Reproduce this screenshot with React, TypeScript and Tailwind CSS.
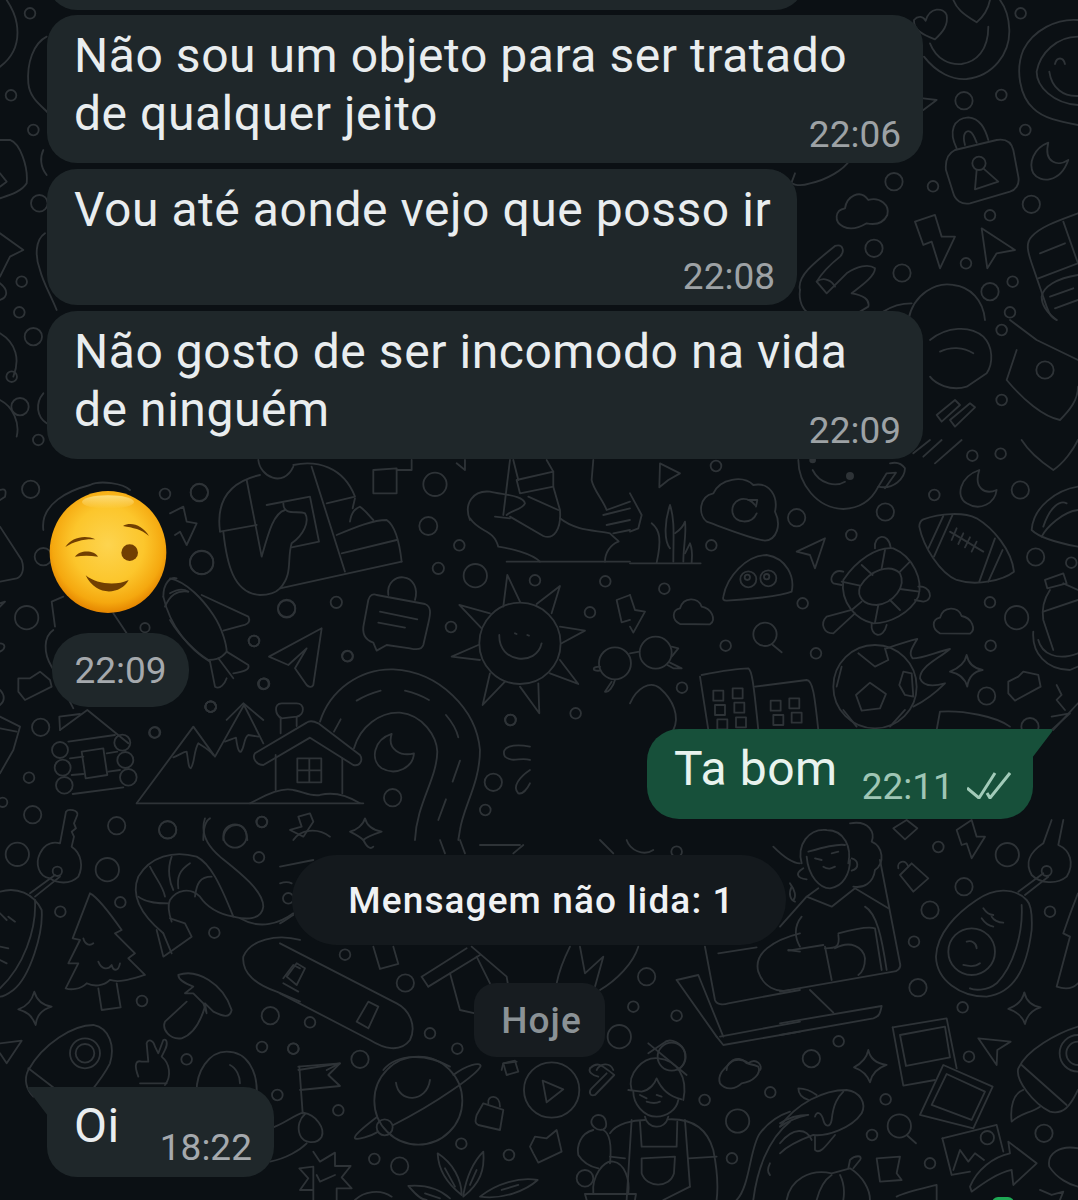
import React from 'react';

type Group = { x: number; y: number; circles?: number[][]; paths: string[] };

// Wallpaper doodles. Each group is written in 3x coordinates from its own origin
const groups: Group[] = [
  {
    x: 780,
    y: 0,
    paths: [
      'M 432 170 C 470 220 520 240 560 237 C 640 228 690 160 688 90 C 687 50 675 20 660 0',
      'M 450 130 C 470 180 510 195 545 192 C 590 185 625 150 625 80',
      'M 402 60 C 415 45 430 50 437 62 C 450 20 490 22 500 45 C 505 75 490 95 465 118 C 430 105 400 90 402 60 Z',
      'M 520 0 C 530 25 545 40 590 67 C 610 50 625 25 630 0',
      'M 894 60 C 830 55 760 90 730 150 C 705 210 720 290 760 325 C 790 355 840 365 894 375',
      'M 894 110 C 830 110 780 160 770 215 C 770 260 820 310 894 315',
      'M 808 215 C 815 265 850 290 894 288',
      'M 825 192 C 830 170 850 170 855 192',
      'M 530 445 C 505 395 520 355 565 352 C 600 355 615 385 625 420',
      'M 555 435 C 545 400 560 390 570 395 C 580 400 585 415 590 428',
      'M 525 450 L 650 420 C 680 415 695 430 700 450 L 715 530 C 720 555 705 570 690 575 L 570 610 C 545 615 525 600 520 580 L 498 510 C 495 480 505 460 525 450 Z',
      'M 590 510 L 585 568 L 655 545 L 610 505',
      'M 805 428 C 760 445 745 490 760 520 C 780 550 840 550 865 480 C 835 500 790 490 805 428 Z',
      'M 190 680 C 160 665 165 630 195 625 C 200 590 240 565 265 600 C 300 590 330 615 322 645 C 310 670 285 675 260 670 C 235 685 210 690 190 680 Z',
      'M 405 665 L 465 645 L 485 710 L 525 710 L 480 805 L 455 725 L 430 735 Z',
      'M 605 685 L 705 750 L 650 760 L 622 805 Z',
      'M 60 870 C 50 830 100 790 165 738 C 190 730 195 755 180 770 C 155 790 125 820 110 845 L 140 880 L 200 820 C 230 800 265 790 285 805 C 285 830 240 860 215 880 C 250 885 270 900 265 920 L 240 935',
      'M 60 870 C 55 905 70 930 85 940',
      'M 110 845 C 130 830 155 840 165 860',
      'M 894 640 C 840 660 780 680 755 710 C 735 730 745 760 755 790 L 800 920 C 810 950 820 955 830 960',
      'M 780 760 L 855 730',
      'M 850 665 L 894 790',
      'M 775 835 L 894 790',
      'M 894 825 C 830 835 790 860 785 890 C 785 920 810 945 830 960',
      'M 810 890 L 880 865',
      'M 825 925 L 894 900',
      'M 385 960 C 400 880 470 845 520 855 C 570 860 610 900 615 960',
      'M 310 935 C 340 915 370 910 395 910',
      'M 430 295 L 470 300 L 430 330',
      'M 0 520 C 30 560 60 560 90 550 C 140 540 190 510 210 480',
      'M 45 520 L 30 560',
    ],
    circles: [
      [722, 40, 16], [552, 302, 26], [664, 285, 16], [736, 390, 16], [342, 545, 26], [459, 559, 16], [754, 613, 26],
      [630, 646, 16], [282, 745, 26], [366, 819, 26], [558, 790, 16], [698, 845, 16], [630, 875, 26], [690, 937, 16],
      [597, 490, 20],
    ],
  },
  {
    x: 930,
    y: 320,
    paths: [
      'M 0 60 C 50 20 120 15 160 50 C 190 80 190 130 170 160 L 110 200 C 60 215 15 190 0 170',
      'M 30 95 C 60 80 100 80 130 100',
      'M 240 0 L 320 60 L 444 120',
      'M 260 90 L 230 180 C 280 240 340 290 390 300 C 420 270 444 240 444 200',
      'M 20 285 L 75 240 L 90 255 L 35 305 Z',
      'M 60 300 L 120 250 L 135 262 L 75 320 Z',
    ],
    circles: [[215, 30, 16], [345, 150, 26], [215, 240, 16]],
  },
  {
    x: 630,
    y: 440,
    paths: [
      'M 90 70 L 150 100 L 115 120 L 88 142 Z',
      'M 0 370 L 212 370',
      'M 65 250 C 90 270 95 300 80 368',
      'M 120 325 C 100 300 105 240 120 195 C 135 240 130 290 130 365',
      'M 135 280 C 150 270 160 260 165 245 C 170 280 160 320 160 365',
      'M 165 340 L 180 310 C 190 335 185 355 185 368',
      'M 0 160 L 35 225 L 25 265 L 0 275',
      'M 230 245 C 205 225 205 170 250 160 C 270 115 340 105 370 135 C 420 125 445 170 435 215 C 455 255 440 300 405 302 C 360 295 300 270 230 245 Z',
      'M 375 195 C 345 160 300 180 308 220 C 315 250 365 255 380 220',
      'M 355 180 L 382 180 L 378 200',
      'M 505 60 C 505 130 560 205 640 207 C 700 205 730 170 745 140 C 790 150 825 115 825 85 C 815 70 800 65 780 70',
      'M 548 90 C 570 135 620 140 645 125',
      'M 745 140 L 770 100 L 798 98 L 765 145',
      'M 850 40 L 900 0',
      'M 915 70 L 995 0',
      'M 880 50 L 935 0',
      'M 1048 90 C 990 110 975 170 1010 190 C 1050 215 1095 190 1100 150 C 1065 165 1030 145 1048 90 Z',
      'M 880 238 C 930 220 1000 215 1040 235 C 1090 265 1145 330 1152 395 C 1120 420 1040 440 980 420 C 930 400 880 320 868 260 C 868 250 872 242 880 238 Z',
      'M 940 228 L 895 325',
      'M 968 224 L 912 350',
      'M 1095 295 L 1048 425',
      'M 1118 330 L 1075 425',
      'M 960 275 L 1060 335',
      'M 980 265 L 965 300 M 1000 280 L 985 312 M 1020 292 L 1005 322 M 1040 305 L 1025 335',
      'M 1344 140 C 1280 150 1210 200 1205 270 C 1230 295 1290 310 1344 320',
      'M 1344 210 C 1300 215 1250 260 1235 290',
      'M 1240 260 C 1260 200 1290 180 1310 190',
      'M 1175 0 C 1200 40 1240 70 1270 90 C 1300 70 1330 30 1344 0',
      'M 500 335 L 585 295 L 555 385 L 540 345 Z',
      'M 280 470 C 290 410 350 345 410 345 C 470 355 495 410 485 455 C 450 470 330 480 290 482 C 280 482 278 478 280 470 Z',
      'M 640 420 C 680 360 740 320 790 325 C 850 350 880 420 865 470 C 840 520 780 550 730 550 C 680 540 630 490 640 420 Z',
      'M 690 440 C 720 390 780 370 810 400 C 830 440 790 490 740 495 C 700 495 680 470 690 440 Z',
      'M 765 330 L 755 385',
      'M 695 375 L 728 405',
      'M 810 395 L 840 365',
      'M 635 425 L 690 437',
      'M 810 447 L 868 455',
      'M 780 480 L 810 510',
      'M 745 495 L 735 548',
      'M 695 485 L 665 510',
      'M 735 325 C 730 285 775 275 782 322',
      'M 640 395 C 610 385 595 420 610 430 L 635 435',
      'M 865 440 C 900 435 915 480 880 485 L 855 480',
      'M 665 510 L 590 530 C 570 550 580 580 610 580 L 675 520',
      'M 725 550 C 720 590 760 600 770 555',
      'M 1245 420 L 1300 400 L 1310 430 L 1252 445 Z',
      'M 1260 450 C 1240 480 1235 510 1240 540 L 1270 630',
      'M 1300 430 L 1344 450',
      'M 1240 515 L 1344 480',
      'M 1210 575 C 1205 640 1250 690 1320 690 L 1344 680',
      'M 1225 600 C 1235 640 1280 665 1344 640',
      'M 150 552 C 125 540 125 510 150 505 C 160 470 205 470 215 500 C 245 505 260 540 240 553 Z',
      'M 930 580 C 905 568 905 538 930 533 C 940 498 985 498 995 528 C 1025 533 1040 568 1020 581 Z',
      'M 425 612 L 455 637',
      'M 0 640 L 28 635',
      'M 125 620 L 145 625 L 125 650',
      'M 120 668 L 155 685 L 130 685 L 112 675',
      'M 0 465 L 15 510 L 45 515 L 10 578 L 0 560',
      'M 215 705 C 290 690 340 685 355 685 C 365 690 370 720 385 870',
      'M 210 710 L 235 870',
      'M 375 740 L 530 720 C 550 720 555 780 565 870',
      'M 720 728 L 768 762 L 750 805 L 695 812 L 678 765 Z',
      'M 685 640 L 735 680 L 775 660 L 765 625',
      'M 820 695 L 845 700 L 850 770 L 825 765 L 808 735 Z',
      'M 635 680 L 620 740 M 640 810 L 680 860 M 825 810 L 780 860',
      'M 770 625 C 800 615 830 605 862 597 C 845 625 835 640 848 655 C 880 655 920 635 960 627 C 920 660 870 680 870 715 C 880 740 910 740 945 730 C 915 760 880 785 850 800',
      'M 1010 645 C 1015 670 1030 685 1058 690 C 1030 695 1015 715 1012 740 C 1005 715 985 700 960 695 C 985 685 1005 670 1010 645 Z',
      'M 1135 725 L 1165 710 L 1180 695 L 1225 705 L 1232 740 L 1155 782 L 1135 760 Z',
      'M 1280 735 L 1295 765 L 1280 780 L 1305 810',
      'M 920 870 L 930 815 C 1000 810 1100 830 1140 860',
      'M 0 790 C 20 745 60 720 90 745 C 130 780 150 830 130 870',
      'M 1265 830 L 1320 820 L 1265 870',
      'M 1344 790 L 1270 870',
      'M 250 752 h 30 v 30 h -30 Z M 308 745 h 30 v 30 h -30 Z M 255 795 h 30 v 30 h -30 Z M 313 788 h 30 v 30 h -30 Z M 262 838 h 30 v 30 h -30 Z M 318 832 h 30 v 30 h -30 Z',
      'M 422 782 h 30 v 30 h -30 Z M 478 775 h 30 v 30 h -30 Z M 430 825 h 30 v 30 h -30 Z M 485 818 h 30 v 30 h -30 Z',
    ],
    circles: [
      [258, 78, 16], [500, 233, 26], [766, 216, 26], [664, 285, 16], [244, 316, 16], [103, 446, 16], [518, 490, 16],
      [287, 617, 16], [558, 640, 16], [156, 743, 16], [913, 165, 16], [1171, 150, 26], [1027, 47, 16], [1112, 41, 16],
      [1217, 351, 26], [1324, 368, 16], [1080, 487, 16], [1160, 533, 35], [1082, 617, 16], [1070, 768, 26],
      [1200, 860, 26], [355, 418, 24], [415, 415, 24], [352, 412, 8], [410, 410, 8], [405, 583, 35], [77, 638, 48],
      [735, 740, 125],
    ],
  },
  {
    x: 170,
    y: 460,
    paths: [
      'M 150 215 C 140 140 160 70 270 45',
      'M 150 215 L 260 195',
      'M 160 215 C 170 310 190 400 270 405 C 300 405 320 395 330 385 L 695 305',
      'M 230 60 L 275 290 C 295 220 310 160 345 150',
      'M 265 0 C 270 50 340 85 370 20',
      'M 290 135 L 420 110 L 447 245 L 365 262',
      'M 340 130 C 340 170 385 150 405 160 C 420 185 400 225 365 250 C 350 300 370 340 330 385',
      'M 425 20 L 525 335',
      'M 370 15 C 440 0 520 20 555 110 L 470 130',
      'M 555 115 L 548 145',
      'M 500 225 C 560 200 610 180 650 180 C 680 200 690 260 695 305',
      'M 515 280 L 680 240',
      'M 540 185 C 545 150 560 145 570 140 C 590 155 600 170 610 180',
      'M 610 30 L 680 25 L 680 100 L 610 100 Z',
      'M 680 30 L 725 30 L 725 0',
      'M 1000 165 L 1020 0',
      'M 975 170 L 1020 175',
      'M 900 180 C 880 130 910 90 960 95 C 1000 105 1060 105 1065 130 C 1055 150 1025 150 1010 165',
      'M 900 175 C 930 220 970 205 985 260 C 1020 265 1085 280 1110 305',
      'M 1010 305 L 1380 305',
      'M 1040 60 L 1150 35 L 1150 80 L 1050 100 Z',
      'M 1030 0 L 1045 60',
      'M 1130 0 L 1150 35',
      'M 1150 80 L 1170 150 C 1175 210 1150 240 1120 228 L 1020 170',
      'M 1075 110 L 1165 150',
      'M 1170 175 C 1220 215 1280 210 1320 220 C 1340 240 1350 245 1345 245 C 1320 255 1305 280 1305 305',
      'M 1270 0 L 1265 60 C 1270 90 1300 120 1310 150 L 1380 125',
      'M 1300 165 L 1380 145 M 1310 195 L 1380 180 M 1330 220 L 1380 210',
      'M 885 0 L 885 30 L 860 10',
      'M 620 405 L 765 432 C 785 440 782 460 775 490 L 760 555 C 755 570 740 570 720 565 L 650 555 L 620 572 L 610 548 C 585 540 575 520 582 490 L 595 420 C 598 405 610 400 620 405 Z',
      'M 655 405 C 650 365 680 350 700 352 C 730 355 745 385 735 420',
      'M 630 455 L 742 478',
      'M 625 488 L 705 503',
      'M 1000 440 L 1012 345 L 1050 425',
      'M 1100 432 L 1170 378 L 1145 460',
      'M 1170 500 L 1245 512 L 1175 550',
      'M 1170 600 L 1225 672 L 1140 640',
      'M 1105 670 L 1108 760 L 1050 680',
      'M 1005 665 L 938 735 L 960 640',
      'M 930 600 L 845 590 L 925 555',
      'M 935 505 L 868 435 L 960 460',
      'M 988 525 C 985 610 1100 620 1115 550',
      'M 297 590 L 455 505 L 430 675 C 425 685 415 680 410 675 L 375 625 L 410 565 L 355 615 Z',
      'M 0 355 C 50 365 100 420 130 465 C 160 510 170 560 170 575 C 150 600 130 600 115 600 C 80 580 30 530 0 480',
      'M 95 405 L 235 470 C 245 490 225 495 215 497 L 160 512',
      'M 0 400 C 25 385 40 385 55 395',
      'M 120 605 L 135 680 C 150 690 165 670 170 655',
      'M 145 595 L 190 655',
      'M 170 575 L 235 615 C 240 630 220 635 190 640',
      'M 1290 620 C 1265 620 1265 635 1290 632',
      'M 1325 665 L 1305 695 C 1315 700 1330 680 1335 660',
      'M 1380 405 L 1340 420 L 1355 487 L 1380 480',
      'M 0 160 L 40 140 L 50 185 L 80 190 L 50 255 L 30 215 L 15 225',
      'M 1035 520 L 1040 522 M 1072 525 L 1077 527',
    ],
    circles: [
      [88, 97, 26], [95, 308, 35], [795, 73, 35], [775, 198, 27], [868, 256, 16], [805, 325, 17], [916, 347, 35],
      [1095, 361, 16], [1306, 364, 16], [1260, 457, 16], [350, 445, 26], [499, 427, 17], [252, 543, 16], [533, 589, 16],
      [843, 501, 16], [282, 671, 16], [122, 740, 16], [1021, 780, 16], [1217, 760, 16], [1050, 550, 122], [1335, 610, 48],
    ],
  },
  {
    x: 130,
    y: 640,
    paths: [
      'M 20 490 L 190 260 L 255 350 L 342 195 L 400 310',
      'M 20 490 L 700 490',
      'M 130 352 C 150 345 160 335 170 335 C 175 360 175 385 182 385 C 195 370 190 335 205 310 C 220 320 240 330 250 345',
      'M 285 305 C 300 300 310 295 318 293 C 320 310 325 340 333 335 C 345 320 340 295 355 285 L 385 290',
      'M 455 235 C 435 225 430 190 455 190 L 500 190 C 525 190 525 225 500 230 L 455 235',
      'M 452 232 L 452 280',
      'M 500 232 L 500 258',
      'M 375 340 L 530 248 C 540 240 555 245 565 250 L 690 345 C 700 360 690 380 670 375 L 540 293 L 400 375 C 380 375 365 355 375 340 Z',
      'M 437 345 L 437 450',
      'M 637 355 L 637 460',
      'M 502 355 h 72 v 72 h -72 Z M 538 355 v 72 M 502 391 h 72',
      'M 360 490 C 400 470 450 440 490 450 C 520 455 540 470 570 465 C 610 455 650 465 690 490',
      'M 570 245 C 600 150 690 85 790 88 C 930 95 1040 210 1050 330 C 1050 430 1000 500 990 570 L 985 600',
      'M 672 325 C 690 260 750 215 810 218 C 880 225 920 290 922 335 C 920 420 860 490 855 600',
      'M 680 182 C 700 170 730 158 752 152',
      'M 825 152 C 850 158 880 170 897 180',
      'M 948 225 C 965 245 980 270 985 292',
      'M 990 362 L 968 425',
      'M 948 478 L 925 540',
      'M 632 238 L 612 275',
      'M 785 282 C 730 300 720 360 755 385 C 800 410 850 380 852 340 C 815 350 770 330 785 282 Z',
      'M 1200 320 C 1150 310 1110 320 1125 350 C 1150 370 1170 350 1200 360',
      'M 1200 390 C 1170 410 1145 440 1165 460 C 1180 465 1195 440 1200 430',
      'M 480 570 L 515 560 L 505 530 L 540 520 L 550 545 L 520 590 Z',
      'M 490 600 C 510 570 560 560 600 590',
      'M 705 535 C 710 555 725 570 755 575 C 725 585 705 595 700 600 M 705 535 C 700 555 680 570 660 575 C 680 585 695 595 700 600',
      'M 220 600 C 220 560 230 540 240 535',
      'M 280 600 C 280 570 300 555 320 555 C 340 555 350 575 352 600',
    ],
    circles: [
      [652, 48, 16], [402, 131, 16], [242, 200, 16], [73, 278, 16], [1142, 240, 16], [1090, 427, 26], [1066, 510, 16],
      [788, 473, 26], [395, 546, 16], [113, 570, 26],
    ],
  },
  {
    x: 0,
    y: 700,
    paths: [
      'M 180 90 L 262 30 L 385 130',
      'M 180 90 L 178 50 L 240 42',
      'M 205 125 L 345 105',
      'M 210 175 L 250 170',
      'M 320 160 L 352 155',
      'M 215 225 L 250 222',
      'M 325 215 L 360 210',
      'M 218 282 L 370 262',
      'M 245 155 L 310 145 L 322 225 L 257 235 Z',
      'M 180 430 L 198 335 C 205 325 235 330 232 345 L 222 370 L 228 385 L 215 395 L 222 410 L 215 440 C 245 460 250 500 235 530 C 210 555 170 550 150 535 C 115 530 105 490 120 460 C 135 430 160 425 180 430',
      'M 90 580 L 165 525 M 105 590 L 180 530',
      'M 0 575 C 50 560 100 580 125 630 C 130 700 90 830 40 870 C 20 885 10 890 0 890',
      'M 105 600 C 110 690 70 800 0 865',
      'M 0 640 L 20 660 M 25 650 L 45 665 M 0 740 L 25 745 M 0 780 L 20 790',
      'M 270 580 C 290 590 330 640 365 690 L 345 700 L 405 760 L 385 775 L 435 825 C 400 835 360 850 330 840 C 310 860 280 860 260 850 C 240 870 210 870 197 865 L 235 790 L 205 790 L 240 720 L 218 715 Z',
      'M 295 865 L 305 930 L 362 922 L 350 850',
      'M 250 715 C 255 735 270 738 280 730',
      'M 295 785 C 305 810 325 810 335 795 C 340 815 355 815 360 790',
      'M 490 700 C 430 650 390 590 415 530 C 450 470 520 450 590 470 C 630 490 660 550 700 650 C 650 640 620 620 600 590 C 570 560 530 570 510 600 C 500 620 510 650 515 665',
      'M 470 690 L 490 770 L 575 710 L 555 670 L 510 655',
      'M 490 700 L 515 760',
      'M 450 500 C 470 540 490 560 495 590',
      'M 515 470 C 500 510 510 550 520 570',
      'M 570 490 C 540 510 530 530 535 565',
      'M 635 530 C 600 530 590 550 585 590',
      'M 415 590 C 440 610 480 610 505 610',
      'M 615 355 C 600 400 625 440 660 470 C 710 510 790 570 790 620 C 785 660 740 660 700 650',
      'M 720 655 C 780 690 840 670 880 640',
      'M 535 825 C 590 805 670 850 695 930 C 690 955 670 950 640 935 L 615 910 L 620 940 L 610 910 L 580 880 L 555 880 L 580 860 C 555 850 535 840 535 825 Z',
      'M 560 905 L 495 965 C 485 990 510 1020 545 1015 C 575 1005 600 970 615 920',
      'M 900 720 C 830 700 750 720 730 770 C 725 820 770 855 830 875 L 900 905',
      'M 850 835 L 880 795 L 900 805 M 850 850 L 895 875',
      'M 103 875 C 110 900 125 915 155 920 C 125 930 110 945 107 975 C 95 945 80 935 55 928 C 80 920 95 905 103 875 Z',
      'M 85 1110 C 130 1030 220 975 280 975 C 330 985 345 1040 330 1090 C 310 1130 280 1165 260 1190',
      'M 85 1110 C 70 1140 80 1170 100 1190',
      'M 85 1105 L 170 1170',
      'M 415 1130 C 400 1090 410 1080 425 1085 L 445 1085 L 440 1030 C 445 1015 460 1020 465 1040 L 475 1060 L 490 1020 C 500 1015 505 1030 495 1050 L 485 1070 C 510 1090 515 1130 495 1155',
      'M 420 1150 L 500 1150',
      'M 590 1190 C 585 1110 630 1055 680 1055 C 740 1055 775 1110 770 1190',
      'M 690 1095 C 710 1105 720 1130 720 1150',
      'M 0 1030 L 65 1022 L 20 1090 L 0 1060',
      'M 0 50 L 60 80 L 40 150 L 0 220',
      'M 0 85 L 50 95',
    ],
    circles: [
      [180, 150, 24], [188, 203, 24], [193, 256, 25], [367, 128, 24], [376, 180, 24], [385, 232, 25], [172, 514, 14],
      [255, 1060, 45], [255, 1060, 28], [122, 82, 26], [465, 97, 16], [632, 20, 16], [87, 233, 16], [98, 344, 26],
      [350, 377, 26], [503, 389, 26], [705, 408, 35], [786, 366, 16], [777, 472, 16], [52, 463, 35], [322, 509, 35],
      [361, 607, 16], [181, 635, 16], [643, 698, 16], [426, 903, 16], [811, 947, 26], [786, 1041, 16], [880, 1046, 16],
      [560, 1078, 16], [865, 595, 16], [8, 307, 14],
    ],
  },
  {
    x: 780,
    y: 820,
    paths: [
      'M 65 130 C 50 75 85 25 140 30 C 195 30 215 85 205 130',
      'M 85 95 C 120 85 170 70 195 75',
      'M 80 110 C 85 170 120 205 150 205 C 190 200 210 160 210 120',
      'M 210 10 C 270 0 285 40 275 65 C 310 80 315 130 285 150 C 280 190 250 205 220 200',
      'M 215 115 C 235 120 240 145 215 152',
      'M 70 145 C 45 160 50 175 80 178',
      'M 35 200 C 25 220 30 240 45 245',
      'M 130 140 C 145 150 155 145 165 140',
      'M 105 115 L 125 120',
      'M 155 100 L 175 95',
      'M 0 320 L 80 230 L 155 260 L 225 205 L 325 265',
      'M 115 205 L 80 230',
      'M 300 120 L 360 430 C 365 445 350 455 340 455 L 0 515',
      'M 255 260 C 290 280 305 350 320 450',
      'M 65 290 C 40 320 45 355 60 380',
      'M 25 392 L 130 375',
      'M 175 340 C 230 325 270 320 285 325 L 305 450',
      'M 135 380 L 155 480',
      'M 135 385 C 170 385 180 380 175 345',
      'M 165 385 C 210 360 250 380 255 415 C 255 440 250 455 235 465',
      'M 90 510 L 160 578',
      'M 0 610 L 305 558 C 300 585 295 590 280 595 L 0 645',
      'M 355 145 C 350 125 375 115 385 140',
      'M 360 165 L 395 130 L 445 175 L 400 215 Z',
      'M 340 25 L 380 0 L 412 25 L 375 58 Z',
      'M 530 30 L 575 0 L 590 50 L 615 50 L 575 115 L 560 70 L 545 75 Z',
      'M 790 70 L 815 0 M 850 0 L 835 75 C 870 90 885 130 860 170 C 830 195 780 190 755 165 C 735 130 745 100 790 70',
      'M 715 215 L 790 160 M 735 225 L 805 170',
      'M 740 240 C 700 200 640 205 590 240 C 530 280 470 340 468 410 C 470 480 540 530 620 530 C 700 520 740 450 755 330 C 757 290 755 255 740 240 Z',
      'M 725 255 C 730 340 700 440 650 490 C 620 515 580 510 570 505',
      'M 610 265 C 620 280 630 285 640 285',
      'M 635 290 C 640 300 655 308 670 308',
      'M 605 295 C 615 310 625 318 640 320',
      'M 560 365 C 575 360 590 370 590 385',
      'M 550 435 C 570 440 590 438 600 430',
      'M 733 517 C 738 540 755 558 782 562 C 755 570 740 590 735 612 C 728 590 710 575 685 567 C 710 558 728 540 733 517 Z',
      'M 338 622 L 500 595 L 530 745',
      'M 338 622 L 370 797 L 465 780',
      'M 360 645 L 495 620 L 510 712 L 378 738 Z',
      'M 490 735 L 638 800 L 580 925 L 420 885 Z',
      'M 500 762 L 615 815 L 575 900 L 455 855 Z',
      'M 595 655 L 692 665 L 652 690 L 650 735 Z',
      'M 265 690 C 270 715 285 730 320 735 C 290 745 275 765 270 787 C 262 765 245 750 222 742 C 245 730 260 715 265 690 Z',
      'M 894 620 C 830 640 740 690 715 745 C 705 780 760 850 810 875 C 850 885 870 860 894 810',
      'M 725 735 L 860 855',
      'M 730 810 C 700 820 690 860 695 905 C 720 880 750 880 780 860',
      'M 0 920 C 50 850 130 810 200 810 C 240 815 260 850 245 880 C 215 925 140 950 100 945 C 60 960 20 980 0 1000',
      'M 110 825 C 90 810 70 805 55 805 C 55 825 70 835 85 840',
      'M 190 815 C 175 830 160 850 155 900 C 150 925 135 920 130 900 C 125 880 110 870 105 890',
      'M 105 950 L 105 990 C 120 1005 140 975 165 945',
      'M 0 910 C 30 890 60 885 85 885 C 60 890 30 900 0 920',
      'M 0 970 C 40 920 80 925 95 960',
      'M 380 945 L 408 970',
      'M 290 1015 L 360 1010 L 350 1060 L 365 1080 L 300 1085 Z',
      'M 487 955 L 650 915 L 670 995',
      'M 487 955 L 515 1065 L 570 1055',
      'M 520 1050 L 540 990 L 565 1025 L 585 1000 L 612 1020',
      'M 570 1100 C 590 1050 640 1010 690 1000 L 685 965 L 770 1030 L 700 1095 L 695 1050 C 650 1060 610 1090 575 1115 Z',
      'M 20 1140 C 30 1080 90 1045 155 1060 L 210 1045 C 250 1070 270 1110 270 1140',
      'M 205 1045 L 210 1020 C 225 1005 250 1005 240 1020 L 220 1045',
      'M 110 1140 C 120 1100 140 1075 155 1065',
      'M 190 1140 C 195 1110 190 1085 180 1065',
      'M 894 220 C 870 280 850 340 850 340 L 870 350 L 830 500 C 860 510 880 505 894 490',
      'M 894 985 C 840 975 800 1000 808 1040 C 830 1075 870 1095 894 1100',
      'M 780 1110 L 815 1125 L 850 1115 L 840 1140',
      'M 350 1130 C 380 1115 430 1105 470 1095 L 470 1140',
    ],
    circles: [
      [475, 81, 16], [682, 104, 35], [552, 200, 26], [450, 270, 26], [810, 275, 16], [402, 365, 16], [414, 503, 26],
      [548, 562, 16], [176, 664, 16], [94, 716, 26], [567, 710, 16], [317, 838, 16], [276, 945, 16], [450, 1030, 16],
      [792, 940, 26], [800, 153, 15], [575, 395, 70], [894, 700, 55], [894, 700, 35], [358, 918, 35], [622, 953, 20],
    ],
  },
  {
    x: 270,
    y: 1040,
    paths: [
      'M 550 105 C 590 75 630 65 632 78 C 625 100 500 190 370 255',
      'M 320 232 C 270 270 250 290 255 295 C 265 300 300 290 325 275',
      'M 378 128 C 385 190 470 190 480 120',
      'M 85 80 L 210 70 L 175 105 L 210 138 L 90 150',
      'M 88 80 L 98 220',
      'M 0 265 C 40 255 70 225 100 218 C 140 225 165 265 155 290 C 140 315 100 310 90 285 C 80 260 90 235 105 222',
      'M 0 365 C 50 355 90 330 110 310',
      'M 818 122 L 880 148 L 830 187 Z',
      'M 700 70 L 735 62 L 745 95 L 710 105 Z',
      'M 640 190 L 700 210 L 690 270 L 625 255 C 615 250 615 245 620 225 Z',
      'M 655 190 C 650 165 690 160 690 200',
      'M 780 320 L 795 290 L 830 295 L 860 270 L 875 335 L 805 368 L 790 340 Z',
      'M 960 85 C 985 60 1000 80 1033 105 L 975 165 C 960 170 955 155 965 145 L 1010 100',
      'M 985 110 C 965 105 955 95 960 85',
      'M 1135 10 L 1250 105',
      'M 1085 150 C 1070 100 1120 50 1165 55 C 1220 60 1255 110 1240 180',
      'M 1075 150 L 1115 155 C 1140 150 1155 130 1160 115 C 1175 150 1200 170 1235 178',
      'M 1090 155 C 1090 190 1120 230 1160 230 C 1190 230 1220 210 1225 180',
      'M 1110 165 L 1130 175 M 1160 165 L 1175 170 M 1130 185 C 1145 190 1160 190 1170 185',
      'M 1125 230 C 1130 265 1185 275 1195 230',
      'M 1020 280 C 1040 250 1090 240 1125 240',
      'M 1195 238 C 1260 235 1310 260 1330 330 C 1340 380 1345 440 1340 480',
      'M 1085 240 L 1070 480',
      'M 1245 240 L 1260 440',
      'M 1110 245 L 1115 320 L 1220 320 L 1222 245',
      'M 1115 355 L 1215 350 L 1212 400 C 1200 445 1130 445 1115 400 Z',
      'M 1020 350 L 1065 355',
      'M 1255 355 L 1340 350',
      'M 1260 440 L 1180 480',
      'M 985 225 C 1010 225 1015 260 1000 268 C 980 275 960 255 965 240 C 970 225 985 225 985 225 Z',
      'M 970 270 C 930 280 920 320 925 345 C 940 370 960 380 985 385',
      'M 1000 270 C 1020 280 1025 320 1020 370',
      'M 970 460 C 965 410 1000 360 1030 365 C 1065 370 1080 420 1075 460',
      'M 945 462 L 1098 462 L 1095 480 M 945 462 L 950 480',
      'M 575 465 C 530 430 505 390 503 340 C 550 370 575 420 575 465 Z',
      'M 580 465 C 590 410 610 365 640 335 C 645 390 630 430 580 470 Z',
      'M 630 470 C 680 430 750 410 803 420 C 770 450 700 480 630 470 Z',
      'M 540 475 C 500 440 450 435 415 438 C 430 455 450 480 470 480',
      'M 525 385 L 555 440',
      'M 620 390 L 600 435',
      'M 695 450 L 745 435',
      'M 465 460 L 510 475',
      'M 130 335 L 150 365 L 195 338 L 195 378 L 242 378 L 215 412 L 245 445 L 200 445 L 200 480',
      'M 130 480 L 130 450 L 90 450 L 115 415 L 88 385 L 130 380 Z',
      'M 140 405 L 150 425 L 195 405',
      'M 255 480 C 280 455 330 445 365 470',
      'M 1400 480 C 1440 440 1440 320 1470 280 C 1500 240 1530 225 1560 215',
      'M 1450 480 C 1460 400 1490 300 1560 245',
      'M 1500 370 C 1490 390 1495 400 1500 405',
      'M 1390 60 C 1370 80 1340 100 1350 130 C 1370 155 1400 145 1415 130 C 1450 125 1475 100 1465 80 C 1445 70 1430 75 1425 65 C 1415 55 1400 55 1390 60 Z',
    ],
    circles: [
      [445, 182, 132], [344, 262, 24], [845, 150, 83], [1205, 50, 42], [945, 415, 25], [70, 26, 16], [270, 58, 26],
      [562, 26, 16], [22, 165, 16], [205, 211, 16], [574, 311, 16], [313, 357, 16], [389, 378, 26], [717, 345, 16],
      [1304, 180, 16], [1501, 157, 16], [1403, 243, 35], [1386, 355, 16],
    ],
  },
  {
    x: 280,
    y: 840,
    paths: [
      'M 0 310 L 350 490 C 390 510 410 560 390 600 C 360 640 310 625 270 600 L 0 460',
      'M 20 410 L 50 370 L 75 385 L 50 435 Z',
      'M 230 545 L 265 485 L 295 500 L 265 565 Z',
      'M 280 320 L 300 387 L 355 372 L 340 320',
      'M 425 410 L 560 325',
      'M 445 440 L 600 345',
      'M 425 410 L 445 440',
      'M 575 320 L 680 410 L 685 440',
      'M 510 400 L 540 510 L 585 520',
      'M 590 350 L 630 430',
      'M 900 320 L 915 400 L 970 350 L 945 440',
      'M 830 430 C 840 380 860 340 870 320',
      'M 960 450 C 1010 420 1060 370 1075 320',
      'M 1275 320 L 1305 480 C 1310 495 1330 495 1345 490 L 1560 450',
      'M 1190 420 L 1255 405 L 1330 590',
      'M 1190 420 L 1310 590',
      'M 1310 590 L 1330 615 L 1560 575',
      'M 1320 590 L 1560 545',
      'M 1315 340 L 1430 322',
      'M 1525 330 L 1560 335',
      'M 1560 280 C 1480 300 1420 340 1435 395 C 1450 440 1490 460 1530 450',
      'M 1105 640 L 1150 610 C 1170 590 1210 610 1215 640 C 1220 660 1210 680 1195 690',
      'M 1340 690 C 1340 660 1380 650 1405 670 C 1430 650 1450 680 1440 690',
      'M 950 690 C 960 670 990 665 1000 690',
      'M 310 690 C 350 640 440 640 510 680',
      'M 670 670 L 710 665 M 670 670 L 665 690',
      'M 55 690 L 180 670 L 140 690',
      'M 0 80 L 100 60',
      'M 600 15 L 720 15',
      'M 700 40 L 730 15',
      'M 0 250 C 20 240 30 230 40 225',
      'M 0 130 C 15 125 25 125 35 130',
      'M 250 0 C 260 20 270 30 280 20',
      'M 480 0 L 495 40',
      'M 540 0 L 555 40',
      'M 960 0 L 1000 40',
      'M 1040 0 C 1050 30 1090 50 1120 30',
      'M 1480 20 C 1510 50 1540 70 1560 70',
      'M 1530 130 C 1545 150 1550 170 1540 180',
    ],
    circles: [
      [195, 344, 16], [376, 429, 26], [90, 547, 16], [450, 580, 16], [1100, 410, 26], [1060, 500, 16], [1190, 527, 16],
      [1018, 590, 35], [1190, 35, 16],
    ],
  },
  {
    x: 0,
    y: 0,
    paths: [
      'M 0 200 C 40 170 60 130 50 70 C 45 40 30 15 20 0',
      'M 140 110 C 100 130 80 190 85 250 C 90 300 130 320 145 340',
      'M 130 450 C 120 470 120 500 140 525',
      'M 0 420 L 30 420 C 60 430 85 500 80 550 C 65 575 30 585 0 595',
      'M 0 520 L 20 545 L 0 560',
      'M 0 700 L 70 750 L 30 770 L 0 830',
      'M 135 700 C 105 720 105 770 120 810 C 130 850 150 880 170 930',
      'M 0 850 C 25 870 25 890 0 900',
      'M 0 1000 C 50 1030 60 1080 40 1130',
      'M 0 1200 C 40 1220 60 1270 50 1310',
      'M 130 1180 C 105 1210 110 1250 140 1270',
    ],
    circles: [
      [90, 40, 16], [33, 286, 16], [100, 390, 16], [118, 610, 25], [65, 845, 16], [58, 937, 16], [100, 1010, 26],
      [35, 1130, 16], [115, 1320, 16], [60, 1220, 26],
    ],
  },
  {
    x: 0,
    y: 470,
    paths: [
      'M 0 170 L 65 270 C 75 300 65 320 50 325 L 0 335',
      'M 0 60 C 15 55 20 60 15 80 L 0 90',
      'M 130 180 C 120 100 210 60 270 45 C 300 30 370 40 390 60',
      'M 190 380 L 155 395 L 165 470',
      'M 340 430 L 380 490',
      'M 160 480 C 130 500 130 550 155 590 L 220 715',
      'M 490 380 C 490 340 510 320 530 325',
      'M 495 410 C 510 375 530 360 565 365',
      'M 490 380 C 510 470 570 540 630 575',
      'M 55 625 L 90 625 L 120 605 L 150 630 L 155 650 L 75 690 L 55 665 Z',
      'M 0 520 C 15 520 20 535 0 545',
      'M 0 400 L 15 395 L 0 410',
      'M 680 750 L 730 700 L 790 750',
      'M 0 660 C 15 675 15 695 0 705',
    ],
    circles: [
      [92, 58, 26], [495, 72, 16], [598, 68, 26], [130, 260, 26], [605, 277, 35], [80, 443, 35], [860, 417, 26],
      [762, 513, 16], [790, 642, 16], [632, 710, 16], [435, 473, 14],
    ],
  },
];

function Wallpaper() {
  return (
    <svg className="absolute inset-0" width="1078" height="1200" viewBox="0 0 1078 1200" fill="none">
      {groups.map((g, i) => (
        <g
          key={i}
          transform={`translate(${g.x} ${g.y}) scale(0.3333)`}
          stroke="#2e3337"
          strokeWidth="5.5"
          strokeLinecap="round"
          strokeLinejoin="round"
        >
          {g.paths.map((d, j) => (
            <path key={j} d={d} />
          ))}
          {(g.circles || []).map((c, j) => (
            <circle key={j} cx={c[0]} cy={c[1]} r={c[2]} />
          ))}
        </g>
      ))}
      <g transform="translate(630 440) scale(0.3333)" fill="#2e3337">
        <circle cx="660" cy="108" r="12" />
        <circle cx="548" cy="60" r="10" />
      </g>
    </svg>
  );
}

function WinkEmoji() {
  return (
    <svg className="block" width="118" height="122" viewBox="149 65 352 366">
      <defs>
        <radialGradient id="face" cx="50%" cy="44%" r="56%">
          <stop offset="0%" stopColor="#fdd44f" />
          <stop offset="55%" stopColor="#fcc62c" />
          <stop offset="85%" stopColor="#f5a80f" />
          <stop offset="100%" stopColor="#e58500" />
        </radialGradient>
        <linearGradient id="shine" x1="0" y1="0" x2="0" y2="1">
          <stop offset="0%" stopColor="#ffeea0" stopOpacity="0.7" />
          <stop offset="100%" stopColor="#ffeea0" stopOpacity="0" />
        </linearGradient>
      </defs>
      <ellipse cx="325" cy="248" rx="175" ry="183" fill="url(#face)" />
      <ellipse cx="325" cy="98" rx="78" ry="20" fill="url(#shine)" />
      <g fill="#713f02">
        <path d="M 197 233 C 215 205 255 195 287 210 C 255 208 225 215 197 233 Z" />
        <path d="M 226 262 C 240 240 285 242 295 262 C 270 258 250 258 226 262 Z" />
        <circle cx="390" cy="250" r="25" />
        <path d="M 370 170 C 395 155 430 170 448 200 C 425 180 400 175 370 170 Z" />
        <path d="M 258 318 C 290 345 350 350 387 332 C 365 375 290 385 258 318 Z" />
      </g>
    </svg>
  );
}

function Bubble({ width, height, mt, text, time }: { width: string; height: string; mt: string; text: React.ReactNode; time: string }) {
  return (
    <div className={`grid ${width} ${height} ${mt} ml-[47px] rounded-[30px] bg-[#1f272a] pl-[27px] pr-[22px] pt-[12px] pb-[10px]`}>
      <p className="col-start-1 row-start-1 text-[48px] leading-[58px] tracking-[0.55px] text-[#e9edef]">{text}</p>
      <span className="col-start-1 row-start-1 self-end justify-self-end text-[37px] leading-[36px] text-[#9da2a5]">{time}</span>
    </div>
  );
}

export default function App() {
  return (
    <div className="relative h-[1200px] w-[1078px] overflow-hidden bg-[#0b1014] font-[Roboto,sans-serif]">
      <Wallpaper />
      <div className="relative flex flex-col">
        {/* cut off message above */}
        <div className="-mt-[60px] ml-[47px] h-[70px] w-[758px] rounded-[30px] bg-[#1f272a]" />

        <Bubble
          width="w-[876px]"
          height="h-[148px]"
          mt="mt-[5px]"
          text={<>Não sou um objeto para ser tratado<br />de qualquer jeito</>}
          time="22:06"
        />
        <Bubble width="w-[750px]" height="h-[136px]" mt="mt-[6px]" text="Vou até aonde vejo que posso ir" time="22:08" />
        <Bubble
          width="w-[876px]"
          height="h-[148px]"
          mt="mt-[6px]"
          text={<>Não gosto de ser incomodo na vida<br />de ninguém</>}
          time="22:09"
        />

        <div className="ml-[49px] mt-[32px]">
          <WinkEmoji />
        </div>

        <div className="ml-[52px] mt-[20px] flex h-[74px] w-[137px] items-center justify-center rounded-[36px] bg-[#1f272a] pt-[2px] text-[37px] text-[#a5a9ad]">
          22:09
        </div>

        {/* outgoing */}
        <div className="relative mr-[45px] mt-[22px] flex h-[90px] w-[386px] items-start self-end rounded-[32px] rounded-tr-none bg-[#17503a] pl-[27px]">
          <svg className="absolute -right-[20px] top-0" width="21" height="29" viewBox="0 0 21 29">
            <path d="M0 0 H18 C21 0 21 2 19 4 L0 29 Z" fill="#17503a" />
          </svg>
          <span className="mt-[11px] text-[48px] leading-[58px] tracking-[0.55px] text-[#e9f3ee]">Ta bom</span>
          <span className="ml-[24px] mt-[37px] text-[37px] leading-[42px] text-[#9fc6b5]">22:11</span>
          <svg className="ml-[13px] mt-[43px]" width="44" height="27" viewBox="0 0 44 27" fill="none" stroke="#a2cbb9" strokeWidth="3">
            <path d="M0 16 L12 26 L28 1" />
            <path d="M20 21 L23 26 L43 1" />
          </svg>
        </div>

        <div className="mt-[36px] flex h-[90px] w-[494px] items-center justify-center self-center rounded-[45px] bg-[#14191d] pl-[5px] pt-[2px] text-[37px] font-medium tracking-[1.1px] text-[#f0f2f4]">
          Mensagem não lida: 1
        </div>

        <div className="mt-[38px] flex h-[74px] w-[131px] items-center justify-center self-center rounded-[22px] bg-[#171c20] pl-[5px] pt-[2px] text-[37px] font-medium tracking-[1.1px] text-[#8b9296]">
          Hoje
        </div>

        {/* incoming with tail */}
        <div className="relative ml-[47px] mt-[30px] flex h-[90px] w-[227px] items-start rounded-[30px] rounded-tl-none bg-[#1f272a] pl-[27px]">
          <svg className="absolute -left-[20px] top-0" width="21" height="29" viewBox="0 0 21 29">
            <path d="M21 0 H3 C0 0 0 2 2 4 L21 29 Z" fill="#1f272a" />
          </svg>
          <span className="mt-[10px] text-[48px] leading-[58px] tracking-[0.55px] text-[#e9edef]">Oi</span>
          <span className="ml-[40px] mt-[40px] text-[37px] leading-[42px] text-[#a5a9ad]">18:22</span>
        </div>
      </div>

      {/* next message peeking in at the bottom edge */}
      <div className="absolute left-[992px] top-[1197px] h-[6px] w-[22px] rounded-t-full bg-[#1fa855]" />
    </div>
  );
}
